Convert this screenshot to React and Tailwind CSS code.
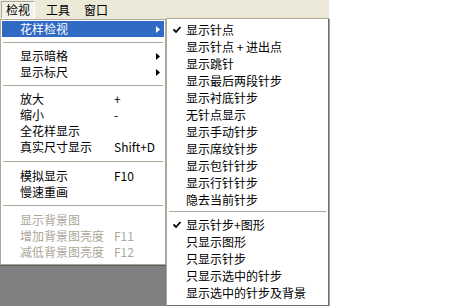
import React from "react";

const font = { fontFamily: '"Noto Sans CJK SC", "Liberation Sans", sans-serif' };

function Arrow({ white }) {
  return (
    <svg width="4" height="7" viewBox="0 0 4 7" className="ml-auto mr-[4px]">
      <path d="M0 0 L4 3.5 L0 7 Z" fill={white ? "#ffffff" : "#000000"} />
    </svg>
  );
}

function Check() {
  return (
    <svg width="8" height="8" viewBox="0 0 8 8" className="absolute left-[5px] top-[5px]">
      <path d="M0.5 3.5 L3 6 L7.5 1" stroke="#000" strokeWidth="1.8" fill="none" />
    </svg>
  );
}

function Sep({ h = "h-[11px]" }) {
  return (
    <div className={`${h} flex flex-col justify-center px-[1px]`}>
      <div className="h-px bg-[#aca899]" />
      <div className="h-px bg-white" />
    </div>
  );
}

function MainItem({ label, shortcut, arrow, active, disabled }) {
  return (
    <div
      className={`h-[16px] flex items-center pl-[18px] text-[12px] leading-none ${
        active ? "bg-[#316ac5] text-white" : disabled ? "text-[#aca899]" : "text-black"
      }`}
    >
      <span className="w-[94px] whitespace-nowrap">{label}</span>
      {shortcut && <span className="whitespace-nowrap">{shortcut}</span>}
      {arrow && <Arrow white={active} />}
    </div>
  );
}

function SubItem({ label, checked }) {
  return (
    <div className="relative h-[17px] flex items-center pl-[18px] text-[12px] leading-none text-black whitespace-nowrap">
      {checked && <Check />}
      {label}
    </div>
  );
}

export default function App() {
  return (
    <div className="w-[459px] h-[306px] bg-white overflow-hidden relative" style={font}>
      {/* Menubar */}
      <div className="w-[329px] h-[19px] bg-[#ece9d8] flex items-center text-[12px] text-black">
        <div className="h-[18px] ml-[1px] px-[4px] flex items-center border border-t-[#aca899] border-l-[#aca899] border-b-white border-r-white bg-[#f3f2ea]">
          检视
        </div>
        <div className="ml-[7px] px-[4px]">工具</div>
        <div className="ml-[6px] px-[4px]">窗口</div>
      </div>

      <div className="flex items-start">
        {/* Main menu + background window */}
        <div className="w-[166px] flex flex-col">
          <div className="bg-white border border-[#aca899] p-[1px] pb-[4px] shadow-[1px_1px_0_#716f64]">
            <MainItem label="花样检视" arrow active />
            <Sep />
            <MainItem label="显示暗格" arrow />
            <MainItem label="显示标尺" arrow />
            <Sep />
            <MainItem label="放大" shortcut="+" />
            <MainItem label="缩小" shortcut="-" />
            <MainItem label="全花样显示" />
            <MainItem label="真实尺寸显示" shortcut="Shift+D" />
            <Sep h="h-[13px]" />
            <MainItem label="模拟显示" shortcut="F10" />
            <MainItem label="慢速重画" />
            <Sep h="h-[12px]" />
            <MainItem label="显示背景图" disabled />
            <MainItem label="增加背景图亮度" shortcut="F11" disabled />
            <MainItem label="减低背景图亮度" shortcut="F12" disabled />
          </div>
          <div className="h-[60px] bg-[#808080] rounded-bl-[12px] border-t border-[#5a5a5a]" />
        </div>

        {/* Submenu */}
        <div className="w-[163px] -mt-[1px] bg-white border border-[#aca899] border-r-[#716f64] border-b-[#716f64] p-[1px] pt-[2px] pb-[4px] shadow-[1px_1px_0_#a0a0a0]">
          <SubItem label="显示针点" checked />
          <SubItem label="显示针点 + 进出点" />
          <SubItem label="显示跳针" />
          <SubItem label="显示最后两段针步" />
          <SubItem label="显示衬底针步" />
          <SubItem label="无针点显示" />
          <SubItem label="显示手动针步" />
          <SubItem label="显示席纹针步" />
          <SubItem label="显示包针针步" />
          <SubItem label="显示行针针步" />
          <SubItem label="隐去当前针步" />
          <Sep h="h-[8px]" />
          <SubItem label="显示针步+图形" checked />
          <SubItem label="只显示图形" />
          <SubItem label="只显示针步" />
          <SubItem label="只显示选中的针步" />
          <SubItem label="显示选中的针步及背景" />
        </div>
      </div>
    </div>
  );
}
